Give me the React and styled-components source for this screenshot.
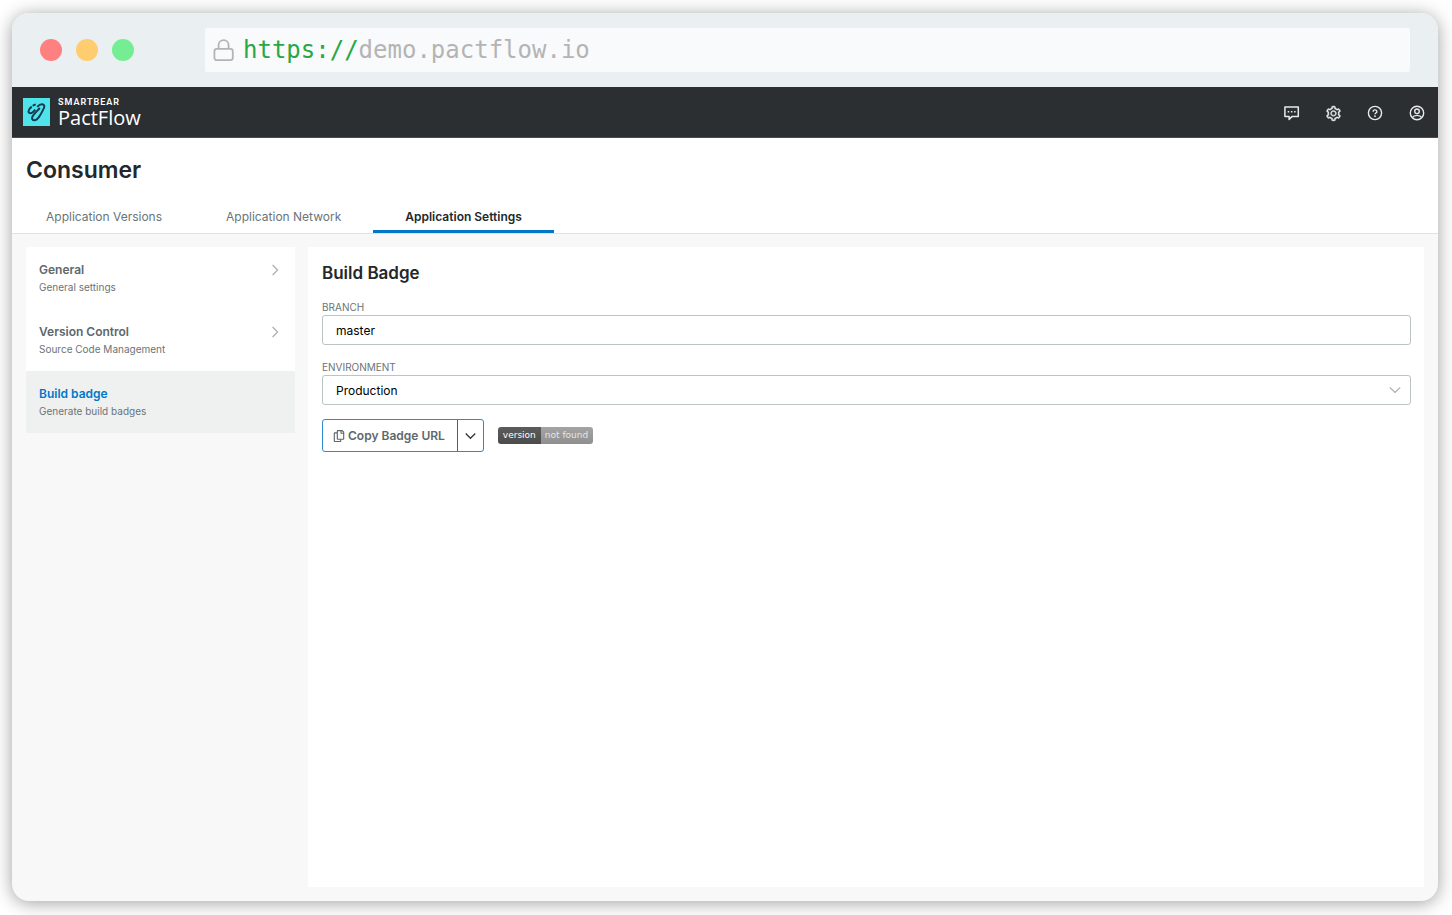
import React, { useState } from "react";
import styled, { createGlobalStyle } from "styled-components";
import { AiOutlineSetting } from "react-icons/ai";
import { FaRegCopy } from "react-icons/fa";

const GlobalStyle = createGlobalStyle`
  * { box-sizing: border-box; }
  body {
    margin: 0;
    background: #fff;
    font-family: Inter, "Liberation Sans", sans-serif;
    font-size: 12px;
    color: #23282b;
  }
  button, input, select { font: inherit; color: inherit; }
  h1, h2, p { margin: 0; }
`;

const Page = styled.div`
  display: flex;
  min-height: 100vh;
  padding: 13px 14px 14px 12px;
`;

const BrowserWindow = styled.div`
  flex: 1;
  display: flex;
  flex-direction: column;
  overflow: hidden;
  border-radius: 17px;
  background: #f8f8f8;
  box-shadow: 0 2px 18px rgba(0, 0, 0, 0.38);
`;

const Chrome = styled.div`
  display: flex;
  align-items: center;
  height: 74px;
  padding: 0 28px;
  background: #eaeff2;
`;

const Lights = styled.div`
  display: flex;
  gap: 14px;
  width: 165px;
`;

const Light = styled.span`
  width: 22px;
  height: 22px;
  border-radius: 50%;
  background: ${(p) => p.$color};
`;

const AddressBar = styled.div`
  flex: 1;
  display: flex;
  align-items: center;
  gap: 8px;
  height: 44px;
  padding: 0 8px;
  border-radius: 2px;
  background: #f8fafc;
  color: #b4b4b4;
  font-family: "DejaVu Sans Mono", monospace;
  font-size: 24px;
  line-height: 28px;
`;

const Scheme = styled.span`
  color: #28a745;
`;

const AppBar = styled.header`
  display: flex;
  align-items: center;
  justify-content: space-between;
  height: 51px;
  padding: 0 12px 0 11px;
  background: #2b2f32;
  border-bottom: 1px solid #4a4e50;
  color: #fff;
`;

const Brand = styled.a`
  display: flex;
  align-items: center;
  gap: 8px;
  color: inherit;
  text-decoration: none;
`;

const BrandText = styled.span`
  display: flex;
  flex-direction: column;
  padding-top: 2px;
`;

const Company = styled.span`
  font-family: Roboto, sans-serif;
  font-size: 9px;
  font-weight: 600;
  line-height: 9px;
  letter-spacing: 1px;
`;

const Product = styled.span`
  font-family: "Open Sans", sans-serif;
  font-size: 20px;
  font-weight: 400;
  line-height: 22px;
`;

const Tools = styled.div`
  display: flex;
  gap: 24px;
  padding-top: 2px;
`;

const IconButton = styled.button`
  display: flex;
  align-items: center;
  justify-content: center;
  width: 18px;
  height: 18px;
  padding: 0;
  border: 0;
  background: none;
  color: #e8eaeb;
  cursor: pointer;
`;

const GearIcon = styled(AiOutlineSetting)`
  stroke: currentColor;
  stroke-width: 24px;
`;

const Heading = styled.div`
  background: #fff;
  border-bottom: 1px solid #dfe1e2;
`;

const Title = styled.h1`
  padding: 17px 14px 18px;
  font-size: 23px;
  font-weight: 600;
  line-height: 30px;
`;

const Tabs = styled.nav`
  display: flex;
  padding-left: 2px;
`;

const Tab = styled.a`
  padding: 0 32px;
  border-bottom: 3px solid ${(p) => (p.$active ? "#0077c8" : "transparent")};
  color: ${(p) => (p.$active ? "#23282b" : "#6a7478")};
  font-weight: ${(p) => (p.$active ? 600 : 400)};
  line-height: 27px;
  text-decoration: none;
`;

const Body = styled.main`
  flex: 1;
  display: flex;
  align-items: stretch;
  gap: 13px;
  padding: 13px 14px 14px;
`;

const SideNav = styled.nav`
  align-self: flex-start;
  flex: none;
  width: 269px;
  background: #fff;
`;

const SideItem = styled.a`
  display: flex;
  align-items: flex-start;
  justify-content: space-between;
  height: 62px;
  padding: 14px 13px;
  background: ${(p) => (p.$active ? "#eff1f1" : "#fff")};
  color: ${(p) => (p.$active ? "#0077c8" : "#5d686c")};
  text-decoration: none;
`;

const SideLabel = styled.span`
  display: block;
  font-weight: 600;
  line-height: 18px;
`;

const SideHint = styled.span`
  display: block;
  color: #6a7478;
  font-size: 10px;
  line-height: 16px;
`;

const Panel = styled.section`
  flex: 1;
  padding: 14px 13px 14px 14px;
  background: #fff;
`;

const PanelTitle = styled.h2`
  margin-bottom: 14px;
  font-size: 17px;
  font-weight: 600;
  line-height: 24px;
`;

const Field = styled.div`
  display: flex;
  flex-direction: column;
  margin-bottom: 14px;
`;

const Label = styled.label`
  color: #6a7478;
  font-size: 10px;
  line-height: 16px;
`;

const TextInput = styled.input`
  width: 100%;
  height: 30px;
  padding: 0 13px;
  border: 1px solid #bcc3c5;
  border-radius: 3px;
  background: #fff;
  color: #000;
`;

const SelectBox = styled.div`
  position: relative;
  display: flex;
  color: #a3abae;

  svg {
    position: absolute;
    right: 10px;
    top: 11px;
    pointer-events: none;
  }
`;

const Select = styled.select`
  width: 100%;
  height: 30px;
  padding: 0 13px;
  border: 1px solid #bcc3c5;
  border-radius: 3px;
  background: #fff;
  color: #000;
  appearance: none;
`;

const Actions = styled.div`
  display: flex;
  align-items: center;
  gap: 14px;
`;

const SplitButton = styled.div`
  display: flex;
  height: 33px;
  border: 1px solid #2b8bcb;
  border-radius: 3px;
  color: #5d686c;
`;

const CopyButton = styled.button`
  display: flex;
  align-items: center;
  gap: 3px;
  padding: 0 12px 0 10px;
  border: 0;
  background: none;
  font-weight: 600;
  cursor: pointer;
`;

const MenuButton = styled.button`
  display: flex;
  align-items: center;
  justify-content: center;
  width: 26px;
  padding: 0;
  border: 0;
  border-left: 1px solid #0077c8;
  background: none;
  color: #33393c;
  cursor: pointer;
`;

const Badge = styled.span`
  display: flex;
  overflow: hidden;
  border-radius: 3px;
  color: #fff;
  font-family: "DejaVu Sans", sans-serif;
  font-size: 9px;
  line-height: 17px;
`;

const BadgePart = styled.span`
  padding: 0 5px 0 ${(p) => (p.$muted ? "4px" : "5px")};
  background: ${(p) =>
    p.$muted
      ? "linear-gradient(#a4a4a4, #8f8f8f)"
      : "linear-gradient(#5c5c5c, #4b4b4b)"};
  color: ${(p) => (p.$muted ? "#e6e6e6" : "#fff")};
`;

const LockIcon = () => (
  <svg width="22" height="24" viewBox="0 0 22 24" fill="none" stroke="#b4b4b4" strokeWidth="1.8" aria-hidden="true">
    <rect x="1.4" y="10.8" width="18.4" height="11.4" rx="2.4" />
    <path d="M5.6 10.6V7.2a5 5 0 0 1 10 0v3.4" />
  </svg>
);

const LogoMark = () => (
  <svg width="27" height="28" viewBox="0 0 27 28" fill="none" aria-hidden="true">
    <rect width="27" height="28" fill="#4fe3ea" />
    <g stroke="#123a55" strokeWidth="2" strokeLinejoin="round">
      <path d="M12.8 6.6c-1.2.1-2.2.6-3.1 1.2" />
      <path d="M8.7 8.6C7 9.9 5.6 11.6 5.5 13.2c-.1 1.7 1.3 2.4 2.8 1.9 1.5-.5 2.8-1.9 4-3.4" />
      <path d="M14.2 8.9c1.3-1.4 3-2.7 4.900-2.600 1.900.1 2.600 1.500 2 3.200-.8 2.300-2.700 5.600-4.300 8.200-1.500 2.500-3.300 4.600-5.400 4.600-2 0-2.900-1.800-2-3.700.9-1.800 4.600-5.500 7.400-8.600" />
    </g>
  </svg>
);

const ChatIcon = () => (
  <svg width="18" height="18" viewBox="0 0 18 18" fill="none" stroke="currentColor" strokeWidth="1.5" aria-hidden="true">
    <path d="M2.9 3h13.4v9.6H9.9L7.1 15.4v-2.8H2.9z" strokeLinejoin="round" />
    <path d="M5.7 7.8h1.5M8.9 7.8h1.5M12.1 7.8h1.5" />
  </svg>
);

const HelpIcon = () => (
  <svg width="18" height="18" viewBox="0 0 18 18" fill="none" stroke="currentColor" strokeWidth="1.4" aria-hidden="true">
    <circle cx="9" cy="9" r="6.6" />
    <path d="M7.1 7.7a1.9 1.7 0 1 1 2.7 1.4c-.6.3-.8.5-.8 1.2" />
    <circle cx="9" cy="12.2" r=".9" fill="currentColor" stroke="none" />
  </svg>
);

const UserIcon = () => (
  <svg width="18" height="18" viewBox="0 0 18 18" fill="none" stroke="currentColor" strokeWidth="1.4" aria-hidden="true">
    <circle cx="9" cy="9" r="6.7" />
    <circle cx="9" cy="7.3" r="2.3" />
    <path d="M4.3 13.6c.9-1.5 2.5-2.2 4.7-2.2s3.8.7 4.7 2.2" />
  </svg>
);

const ChevronRight = () => (
  <svg width="8" height="12" viewBox="0 0 8 12" fill="none" stroke="#a3abae" strokeWidth="1.1" aria-hidden="true">
    <path d="M1.6 1 6.6 6l-5 5" />
  </svg>
);

const ChevronDown = ({ width = 12, stroke = 1.1 }) => (
  <svg width={width} height="8" viewBox="0 0 12 8" fill="none" stroke="currentColor" strokeWidth={stroke} aria-hidden="true">
    <path d="M.8 1.4 6 6.4l5.2-5" />
  </svg>
);

const ChevronSlot = styled.span`
  display: flex;
  align-items: center;
  height: 18px;
  margin-right: 3px;
`;

const sections = [
  { label: "General", hint: "General settings" },
  { label: "Version Control", hint: "Source Code Management" },
  { label: "Build badge", hint: "Generate build badges", active: true },
];

const tabs = ["Application Versions", "Application Network", "Application Settings"];

export default function App() {
  const [branch, setBranch] = useState("master");
  return (
    <Page>
      <GlobalStyle />
      <BrowserWindow>
        <Chrome>
          <Lights>
            <Light $color="#ff8080" />
            <Light $color="#ffcd6f" />
            <Light $color="#75ed93" />
          </Lights>
          <AddressBar>
            <LockIcon />
            <span><Scheme>https://</Scheme>demo.pactflow.io</span>
          </AddressBar>
        </Chrome>
        <AppBar>
          <Brand href="#">
            <LogoMark />
            <BrandText>
              <Company>SMARTBEAR</Company>
              <Product>PactFlow</Product>
            </BrandText>
          </Brand>
          <Tools>
            <IconButton aria-label="Messages"><ChatIcon /></IconButton>
            <IconButton aria-label="Settings"><GearIcon size={17} /></IconButton>
            <IconButton aria-label="Help"><HelpIcon /></IconButton>
            <IconButton aria-label="Account"><UserIcon /></IconButton>
          </Tools>
        </AppBar>
        <Heading>
          <Title>Consumer</Title>
          <Tabs>
            {tabs.map((name, i) => (
              <Tab key={name} href="#" $active={i === 2}>{name}</Tab>
            ))}
          </Tabs>
        </Heading>
        <Body>
          <SideNav>
            {sections.map((s) => (
              <SideItem key={s.label} href="#" $active={s.active}>
                <span>
                  <SideLabel>{s.label}</SideLabel>
                  <SideHint>{s.hint}</SideHint>
                </span>
                {!s.active && <ChevronSlot><ChevronRight /></ChevronSlot>}
              </SideItem>
            ))}
          </SideNav>
          <Panel>
            <PanelTitle>Build Badge</PanelTitle>
            <Field>
              <Label htmlFor="branch">BRANCH</Label>
              <TextInput id="branch" value={branch} onChange={(e) => setBranch(e.target.value)} />
            </Field>
            <Field>
              <Label htmlFor="environment">ENVIRONMENT</Label>
              <SelectBox>
                <Select id="environment" defaultValue="Production">
                  <option>Production</option>
                </Select>
                <ChevronDown />
              </SelectBox>
            </Field>
            <Actions>
              <SplitButton>
                <CopyButton><FaRegCopy size={12} />Copy Badge URL</CopyButton>
                <MenuButton aria-label="More formats"><ChevronDown width={11} stroke={1.5} /></MenuButton>
              </SplitButton>
              <Badge>
                <BadgePart>version</BadgePart>
                <BadgePart $muted>not found</BadgePart>
              </Badge>
            </Actions>
          </Panel>
        </Body>
      </BrowserWindow>
    </Page>
  );
}
